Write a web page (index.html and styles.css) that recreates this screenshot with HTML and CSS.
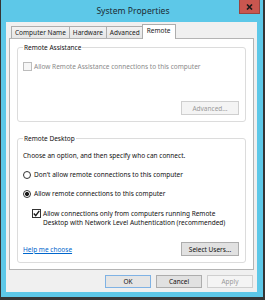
FILE: index.html
```html
<!DOCTYPE html>
<html lang="en">
<head>
    <meta charset="UTF-8">
    <title>System Properties</title>
    <link rel="stylesheet" href="styles.css">
</head>
<body>
    <div class="window">
        <!-- Title bar -->
        <div class="titlebar">
            <span></span>
            <h1 class="title">System Properties</h1>
            <button class="close-btn">
                <svg width="7" height="6" viewBox="0 0 7 6"><path d="M1 0.5 L6 5.5 M6 0.5 L1 5.5" stroke="#1a1a1a" stroke-width="1.6"/></svg>
            </button>
        </div>

        <div class="client">
            <!-- Tabs -->
            <div class="tabs">
                <div class="tab">Computer Name</div>
                <div class="tab">Hardware</div>
                <div class="tab">Advanced</div>
                <div class="tab active">Remote</div>
            </div>

            <div class="panel">
                <fieldset class="group group-assist">
                    <legend>Remote Assistance</legend>
                    <label class="option disabled"><span class="check"></span>Allow Remote Assistance connections to this computer</label>
                    <div class="group-actions">
                        <button class="btn" disabled>Advanced...</button>
                    </div>
                </fieldset>

                <fieldset class="group group-desktop">
                    <legend>Remote Desktop</legend>
                    <p class="hint">Choose an option, and then specify who can connect.</p>
                    <label class="option"><span class="radio"></span>Don't allow remote connections to this computer</label>
                    <label class="option"><span class="radio checked"></span>Allow remote connections to this computer</label>
                    <label class="option sub">
                        <span class="check checked"><svg width="7" height="7" viewBox="0 0 7 7"><path d="M0.8 3.6 L2.7 5.6 L6.3 0.9" fill="none" stroke="#1a1a1a" stroke-width="1.4"/></svg></span>
                        <span>Allow connections only from computers running Remote<br>Desktop with Network Level Authentication (recommended)</span>
                    </label>
                    <div class="group-footer">
                        <a href="#" class="help-link">Help me choose</a>
                        <button class="btn">Select Users...</button>
                    </div>
                </fieldset>
            </div>

            <!-- Dialog buttons -->
            <div class="dialog-buttons">
                <button class="btn default">OK</button>
                <button class="btn">Cancel</button>
                <button class="btn" disabled>Apply</button>
            </div>
        </div>
    </div>
</body>
</html>
```

FILE: styles.css
```css
/* Page */
body {
    margin: 0;
    width: 265px;
    height: 300px;
    background: #353535;
    font-family: "Noto Sans", "DejaVu Sans", sans-serif;
    font-size: 6.5px;
    color: #111;
}

/* Window frame */
.window {
    box-sizing: border-box;
    width: 262px;
    height: 297px;
    margin-left: 1px;
    padding: 0 6px 5px 5px;
    background: #5dc8e8;
    display: flex;
    flex-direction: column;
}

.titlebar {
    height: 22px;
    margin-right: -3px;
    display: grid;
    grid-template-columns: 1fr auto 1fr;
    align-items: center;
}

.title {
    margin: 0;
    font-size: 8.6px;
    font-weight: normal;
    color: #1c2b33;
}

.close-btn {
    justify-self: end;
    align-self: start;
    width: 21px;
    height: 14px;
    padding: 0;
    border: 1px solid #99443f;
    border-top: none;
    background: #c9564f;
    display: flex;
    align-items: center;
    justify-content: center;
}

/* Client area */
.client {
    flex: 1;
    background: #f0f0f0;
    padding: 2px 3px 4px 3px;
    display: flex;
    flex-direction: column;
}

/* Tabs */
.tabs {
    display: flex;
    align-items: flex-end;
    padding-left: 2px;
    height: 15px;
    margin-bottom: -1px;
}

.tab {
    box-sizing: border-box;
    height: 12px;
    margin-bottom: 1px;
    margin-right: -1px;
    padding: 0 3px;
    border: 1px solid #adadad;
    border-bottom: none;
    background: linear-gradient(#f2f2f2, #e6e6e6);
    line-height: 11px;
    color: #222;
}

.tab.active {
    position: relative;
    z-index: 1;
    height: 15px;
    margin: 0 -1px 0 -1px;
    padding: 0 4px;
    background: #fff;
    line-height: 12px;
}

/* Tab page */
.panel {
    flex: 1;
    background: #fff;
    border: 1px solid #b4b4b4;
    padding: 4px 7px 0 7px;
}

/* Group boxes */
.group {
    margin: 0;
    padding: 0 6px 6px 5px;
    border: 1px solid #dcdcdc;
    border-radius: 3px;
}

.group legend {
    padding: 0 1px;
    line-height: 9px;
    color: #111;
}

.group-desktop {
    margin-top: 12px;
    padding-bottom: 6px;
}

.hint {
    margin: 8px 0 0 0;
    line-height: 9px;
}

.option {
    display: flex;
    align-items: center;
    gap: 2px;
    margin-top: 10px;
    line-height: 9px;
}

.group-assist .option {
    margin-top: 10px;
}

.option.disabled {
    color: #8a8a8a;
}

.option.sub {
    align-items: flex-start;
    margin-top: 11px;
    margin-left: 9px;
}

.check {
    box-sizing: border-box;
    width: 9px;
    height: 9px;
    flex: none;
    border: 1px solid #333;
    background: #fff;
    display: flex;
    align-items: center;
    justify-content: center;
}

.option.disabled .check {
    border-color: #bcbcbc;
    background: #f6f6f6;
}

.radio {
    box-sizing: border-box;
    width: 8px;
    height: 8px;
    flex: none;
    margin-right: 1px;
    border: 1px solid #333;
    border-radius: 50%;
    background: #fff;
}

.radio.checked {
    background: radial-gradient(circle, #1a1a1a 0 1.8px, #fff 2.3px);
}

.group-actions {
    display: flex;
    justify-content: flex-end;
    margin-top: 30px;
}

.group-footer {
    display: flex;
    justify-content: space-between;
    align-items: center;
    margin-top: 15px;
}

.help-link {
    color: #0066cc;
    text-decoration: underline;
}

/* Buttons */
.btn {
    box-sizing: border-box;
    height: 13px;
    padding: 0;
    border: 1px solid #adadad;
    background: #e1e1e1;
    font-family: inherit;
    font-size: 6.5px;
    line-height: 11px;
    color: #111;
}

.group .btn {
    width: 58px;
    height: 14px;
}

.btn:disabled {
    border-color: #cfcfcf;
    background: #f4f4f4;
    color: #9a9a9a;
}

.btn.default {
    border-color: #7fb2e4;
    background: #e5e5e5;
}

.dialog-buttons {
    display: flex;
    justify-content: flex-end;
    gap: 5px;
    margin-top: 5px;
    padding-right: 1px;
}

.dialog-buttons .btn {
    width: 46px;
}
```
